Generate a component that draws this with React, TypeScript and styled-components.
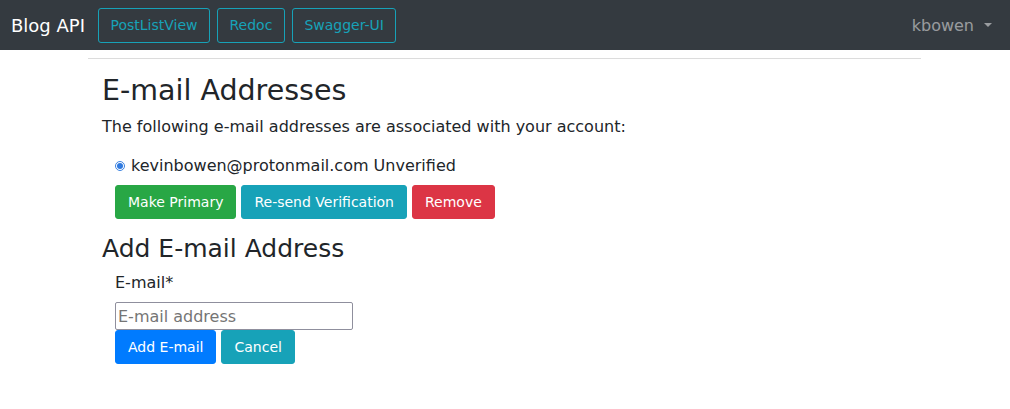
import styled, { createGlobalStyle } from "styled-components";

const GlobalStyle = createGlobalStyle`
  body {
    margin: 0;
    font-family: "DejaVu Sans", "Liberation Sans", sans-serif;
    font-size: 16px;
    color: #212529;
    background: #fff;
  }
`;

const NavBar = styled.nav`
  height: 50px;
  background: #343a40;
  display: flex;
  align-items: center;
  padding: 0 17px 0 11px;
`;

const Brand = styled.span`
  color: #fff;
  font-size: 18px;
  margin-right: 13px;
`;

const NavLinks = styled.div`
  display: flex;
  gap: 7px;
  flex: 1;
`;

const OutlineButton = styled.span`
  border: 1px solid #17a2b8;
  color: #17a2b8;
  border-radius: 3px;
  font-size: 14px;
  line-height: 21px;
  padding: 6px 11.5px;
`;

const UserMenu = styled.span`
  color: rgba(255, 255, 255, 0.5);
  font-size: 16px;
  display: flex;
  align-items: center;
  gap: 10px;
  margin-right: 1px;
  &::after {
    content: "";
    border-top: 4px solid rgba(255, 255, 255, 0.5);
    border-left: 4px solid transparent;
    border-right: 4px solid transparent;
  }
`;

const Main = styled.main`
  margin: 8px 89px 0 88px;
  border-top: 1px solid #dcdcdc;
  padding: 14px 14px 0;
`;

const Title = styled.h1`
  font-size: 28.5px;
  font-weight: 400;
  line-height: 36px;
  margin: 0 0 6px;
`;

const Subtitle = styled.h2`
  font-size: 25px;
  font-weight: 400;
  line-height: 30px;
  margin: 15px 0 7px;
`;

const Text = styled.p`
  margin: 0 0 15px;
  line-height: 24px;
`;

const Indented = styled.div`
  padding-left: 13px;
`;

const RadioRow = styled.label`
  display: flex;
  align-items: center;
  gap: 6px;
  line-height: 24px;
  margin-bottom: 7px;
`;

const Radio = styled.span`
  width: 8px;
  height: 8px;
  border-radius: 50%;
  border: 1px solid #3b82e0;
  display: inline-flex;
  align-items: center;
  justify-content: center;
  &::after {
    content: "";
    width: 6px;
    height: 6px;
    border-radius: 50%;
    background: #2f7ae0;
  }
`;

const ButtonRow = styled.div`
  display: flex;
  gap: 5px;
`;

const Button = styled.button<{ $bg: string }>`
  background: ${(p) => p.$bg};
  border: 1px solid ${(p) => p.$bg};
  color: #fff;
  font-family: inherit;
  font-size: 14px;
  line-height: 22px;
  padding: 5px 12px;
  border-radius: 3px;
`;

const Label = styled.div`
  line-height: 24px;
  margin-bottom: 7px;
`;

const Input = styled.input`
  display: block;
  width: 238px;
  height: 28px;
  box-sizing: border-box;
  border: 1px solid #8f8f9d;
  border-radius: 2px;
  font-family: inherit;
  font-size: 16px;
  padding: 1px 2px;
  &::placeholder {
    color: #757575;
  }
`;

export default function App() {
  return (
    <>
      <GlobalStyle />
      <NavBar>
        <Brand>Blog API</Brand>
        <NavLinks>
          <OutlineButton>PostListView</OutlineButton>
          <OutlineButton>Redoc</OutlineButton>
          <OutlineButton>Swagger-UI</OutlineButton>
        </NavLinks>
        <UserMenu>kbowen</UserMenu>
      </NavBar>
      <Main>
        <Title>E-mail Addresses</Title>
        <Text>The following e-mail addresses are associated with your account:</Text>
        <Indented>
          <RadioRow>
            <Radio />
            kevinbowen@protonmail.com Unverified
          </RadioRow>
          <ButtonRow>
            <Button $bg="#28a745">Make Primary</Button>
            <Button $bg="#17a2b8">Re-send Verification</Button>
            <Button $bg="#dc3545">Remove</Button>
          </ButtonRow>
        </Indented>
        <Subtitle>Add E-mail Address</Subtitle>
        <Indented>
          <Label>E-mail*</Label>
          <Input placeholder="E-mail address" />
          <ButtonRow>
            <Button $bg="#007bff">Add E-mail</Button>
            <Button $bg="#17a2b8">Cancel</Button>
          </ButtonRow>
        </Indented>
      </Main>
    </>
  );
}
